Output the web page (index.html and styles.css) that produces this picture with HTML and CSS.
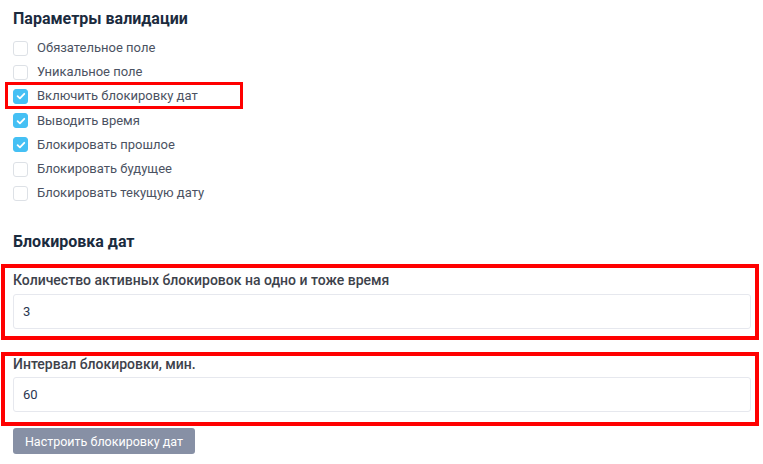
FILE: index.html
```html
<!DOCTYPE html>
<html lang="ru">
<head>
<meta charset="utf-8">
<title>Параметры валидации</title>
<link rel="stylesheet" href="styles.css">
</head>
<body>
<div class="page">
  <h2 class="title first">Параметры валидации</h2>
  <ul class="checks">
    <li class="row"><span class="box"></span><span class="txt">Обязательное поле</span></li>
    <li class="row"><span class="box"></span><span class="txt">Уникальное поле</span></li>
    <li class="row hl"><span class="box on"><svg viewBox="0 0 14 14"><path d="M3.6 7.2l2.3 2.2 4.4-4.6" /></svg></span><span class="txt">Включить блокировку дат</span></li>
    <li class="row"><span class="box on"><svg viewBox="0 0 14 14"><path d="M3.6 7.2l2.3 2.2 4.4-4.6" /></svg></span><span class="txt">Выводить время</span></li>
    <li class="row"><span class="box on"><svg viewBox="0 0 14 14"><path d="M3.6 7.2l2.3 2.2 4.4-4.6" /></svg></span><span class="txt">Блокировать прошлое</span></li>
    <li class="row"><span class="box"></span><span class="txt">Блокировать будущее</span></li>
    <li class="row"><span class="box"></span><span class="txt">Блокировать текущую дату</span></li>
  </ul>

  <h2 class="title second">Блокировка дат</h2>

  <div class="group g1">
    <label class="lbl">Количество активных блокировок на одно и тоже время</label>
    <div class="input">3</div>
  </div>

  <div class="group g2">
    <label class="lbl">Интервал блокировки, мин.</label>
    <div class="input">60</div>
  </div>

  <button class="btn">Настроить блокировку дат</button>
</div>
</body>
</html>
```
FILE: styles.css
```css
*, *::before, *::after { box-sizing: border-box; }
html, body { margin: 0; padding: 0; background: #fff; }
body {
  font-family: Roboto, "Noto Sans", "Liberation Sans", sans-serif;
  font-size: 13px;
  color: #4b5262;
  width: 763px;
  height: 464px;
  overflow: hidden;
}
.page {
  padding: 9px 12px 0 13px;
}
.title {
  margin: 0;
  font-size: 16px;
  line-height: 20px;
  font-weight: 700;
  color: #1b2b3e;
}
.title.first { margin-bottom: 7px; }
.title.second { margin-top: 27px; margin-bottom: 12px; }
.checks {
  list-style: none;
  margin: 0;
  padding: 0;
}
.row {
  position: relative;
  display: flex;
  align-items: center;
  height: 24.2px;
}
.row.hl::after {
  content: "";
  position: absolute;
  left: -8px;
  top: -2px;
  width: 238px;
  height: 27px;
  border: 3px solid #ff0000;
  pointer-events: none;
}
.box {
  width: 15px;
  height: 15px;
  border: 1px solid #dde1e6;
  border-radius: 3px;
  background: #fff;
  flex: none;
  display: flex;
  align-items: center;
  justify-content: center;
}
.box.on {
  background: #45c0f4;
  border-color: #45c0f4;
}
.box svg {
  width: 14px;
  height: 14px;
  flex: none;
}
.box svg path {
  fill: none;
  stroke: #fff;
  stroke-width: 1.8;
  stroke-linecap: round;
  stroke-linejoin: round;
}
.txt {
  margin-left: 9px;
  line-height: 16px;
  color: #4b5262;
}
.group {
  border: 4px solid #ff0000;
  margin: 0 -8px 0 -12px;
  padding: 4px 4px 7px 8px;
  display: flex;
  flex-direction: column;
}
.g2 {
  margin-top: 12px;
  padding-top: 0;
  padding-bottom: 10px;
}
.lbl {
  font-size: 14px;
  font-weight: 500;
  line-height: 17px;
  color: #3d424b;
  margin-bottom: 5px;
}
.g2 .lbl { margin-bottom: 4px; }
.input {
  height: 35px;
  border: 1px solid #e6e8ee;
  border-radius: 3px;
  padding: 0 9px;
  display: flex;
  align-items: center;
  color: #2a3550;
  font-size: 13px;
}
.btn {
  margin-top: 2px;
  width: 182px;
  height: 26px;
  border: none;
  border-radius: 3px;
  background: #8790a5;
  color: #fff;
  font-family: Roboto, "Noto Sans", "Liberation Sans", sans-serif;
  font-size: 12.5px;
  padding: 0;
  display: block;
}
```
